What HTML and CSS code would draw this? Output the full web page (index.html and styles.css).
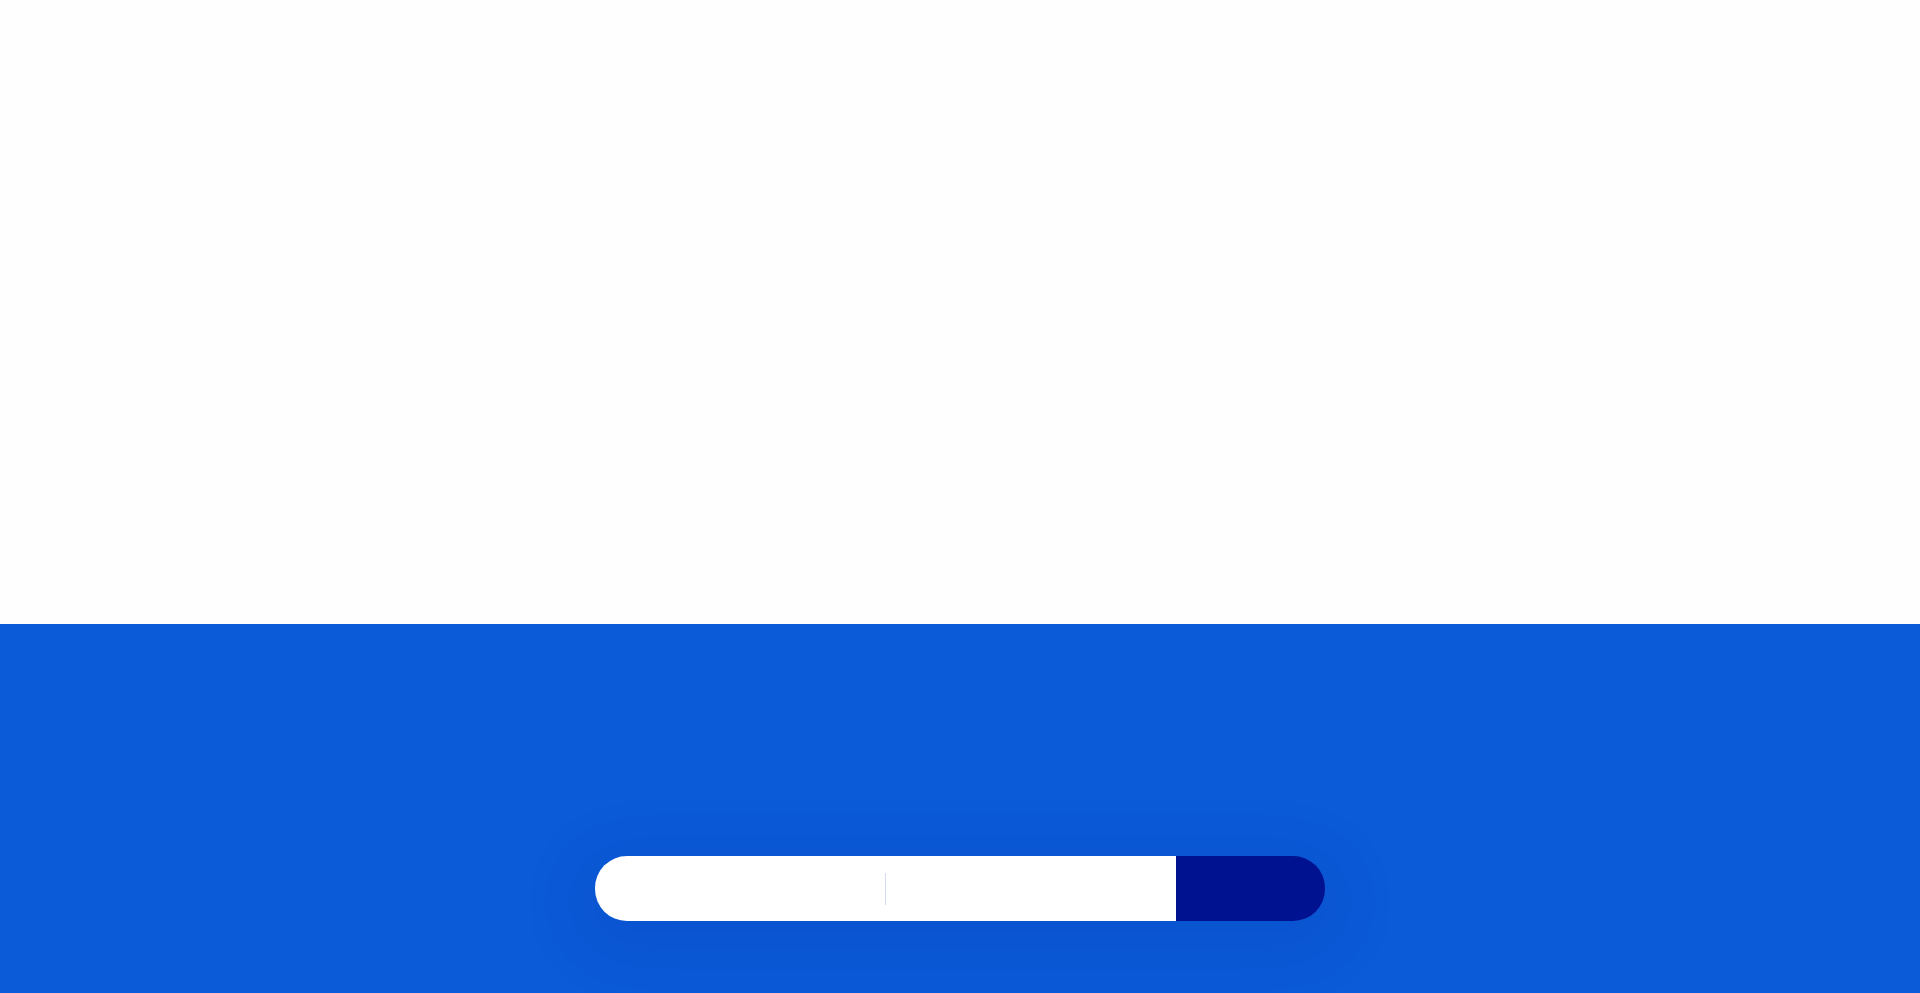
FILE: index.html
```html
<!DOCTYPE html>
<html lang="en">
<head>
  <meta charset="UTF-8" />
  <meta name="viewport" content="width=device-width, initial-scale=1.0"/>
  <title>Search</title>
  <link rel="stylesheet" href="styles.css">
</head>
<body>

<div class="top"></div>

<div class="band">
  <form class="search" id="search-form">
    <label class="field" for="q">
      <span class="caret"></span>
      <input type="text" id="q" aria-label="Search" />
    </label>
    <button type="submit" aria-label="Search"></button>
  </form>
</div>

</body>
</html>
```

FILE: styles.css
```css
html, body {
  margin: 0;
  height: 100%;
}
body {
  font-family: "Liberation Sans", Arial, sans-serif;
  background-color: #0b5ad8;
  display: flex;
  flex-direction: column;
  overflow: hidden;
}
.top {
  height: 624px;
  background: #fefefe;
  flex-shrink: 0;
}
.band {
  flex: 1;
  display: flex;
  justify-content: center;
  padding-top: 232px;
}
.search {
  display: flex;
  width: 730px;
  height: 65px;
  border-radius: 32px;
  box-shadow: 0 14px 60px 18px rgba(6, 40, 150, 0.12);
}
.field {
  flex: 1;
  position: relative;
  display: flex;
  align-items: center;
  justify-content: center;
  background: #fff;
  border-radius: 32px 0 0 32px;
}
.caret {
  width: 1px;
  height: 32px;
  background: #d5dbf3;
}
.field input {
  position: absolute;
  inset: 0;
  width: 100%;
  border: none;
  background: transparent;
  outline: none;
  text-align: center;
  font-size: 18px;
  caret-color: transparent;
}
button {
  width: 149px;
  border: none;
  background-color: #00128f;
  border-radius: 0 32px 32px 0;
  cursor: pointer;
}
button:hover {
  background-color: #00107e;
}
```
